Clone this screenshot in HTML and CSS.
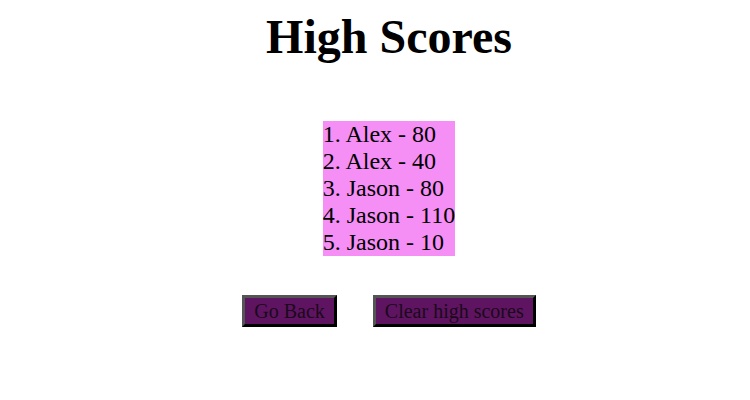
FILE: index.html
```html
<!DOCTYPE html>
<html>
<head>
<meta charset="utf-8">
<link rel="stylesheet" href="styles.css">
</head>
<body>
<main class="page">
  <h1 class="title">High Scores</h1>
  <div class="scores">
    <div class="score">1. Alex - 80</div>
    <div class="score">2. Alex - 40</div>
    <div class="score">3. Jason - 80</div>
    <div class="score">4. Jason - 110</div>
    <div class="score">5. Jason - 10</div>
  </div>
  <div class="actions">
    <button class="btn">Go Back</button>
    <button class="btn">Clear high scores</button>
  </div>
</main>
</body>
</html>
```
FILE: styles.css
```css
html, body {
  margin: 0;
  padding: 0;
  background: #ffffff;
}
.page {
  font-family: "Liberation Serif", "Times New Roman", serif;
  color: #000;
  padding-left: 28px;
  display: flex;
  flex-direction: column;
  align-items: center;
}
.title {
  font-size: 48px;
  font-weight: bold;
  margin: 9px 0 0 0;
}
.scores {
  margin-top: 57px;
  background: #f58ef5;
  font-size: 24px;
  line-height: 27px;
  text-align: left;
}
.actions {
  margin-top: 39px;
  display: flex;
  gap: 36px;
}
.btn {
  font-family: "Liberation Serif", "Times New Roman", serif;
  font-size: 20px;
  color: #1a0a1a;
  background: #5f1462;
  border-style: solid;
  border-width: 3px;
  border-color: #555555 #000000 #000000 #555555;
  padding: 2px 9px;
  height: 32px;
  margin: 0;
}
```
